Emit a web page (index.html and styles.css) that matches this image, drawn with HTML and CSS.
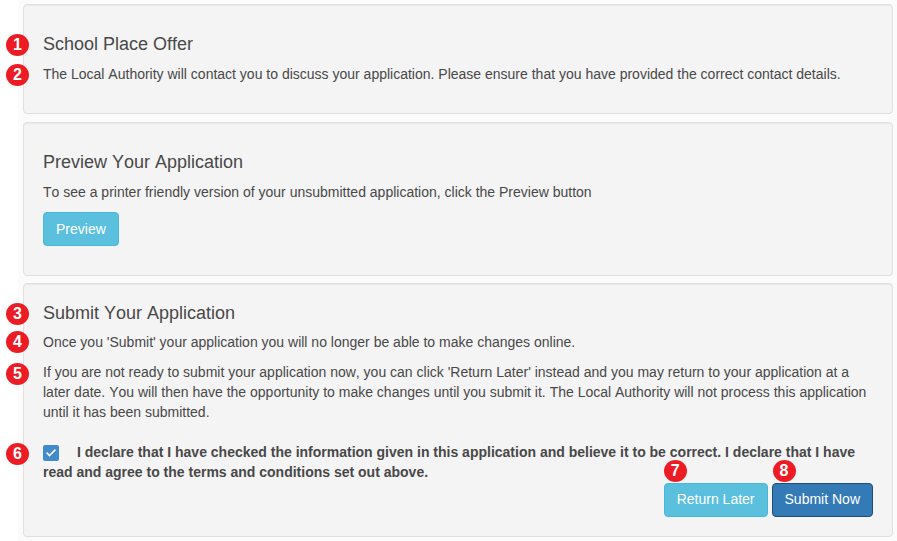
FILE: index.html
```
<!DOCTYPE html>
<html lang="en">

<head>
  <meta charset="UTF-8">
  <title>Submit Your Application</title>
  <link rel="stylesheet" href="styles.css">
</head>

<body>
  <main>
    <section class="well offer">
      <h4>School Place Offer<span class="step">1</span></h4>
      <p>The Local Authority will contact you to discuss your application. Please ensure that you have provided the correct contact details.<span class="step">2</span></p>
    </section>

    <section class="well preview">
      <h4>Preview Your Application</h4>
      <p>To see a printer friendly version of your unsubmitted application, click the Preview button</p>
      <button type="button" class="btn btn-info">Preview</button>
    </section>

    <section class="well submit">
      <h4>Submit Your Application<span class="step">3</span></h4>
      <p>Once you 'Submit' your application you will no longer be able to make changes online.<span class="step step-up">4</span></p>
      <p>If you are not ready to submit your application now, you can click 'Return Later' instead and you may return to your application at a later date. You will then have the opportunity to make changes until you submit it. The Local Authority will not process this application until it has been submitted.<span class="step step-down">5</span></p>
      <label for="declare">
        <input type="checkbox" id="declare" checked>
        <span class="check"><svg width="16" height="16" viewBox="0 0 16 16"><path d="M3.6 7.6 L6.5 10.5 L12.4 4.6" fill="none" stroke="#fff" stroke-width="1.6" /></svg></span>I declare that I have checked the information given in this application and believe it to be correct. I declare that I have read and agree to the terms and conditions set out above.<span class="step step-down">6</span>
      </label>
      <div class="actions">
        <button type="button" class="btn btn-info">Return Later<span class="step">7</span></button>
        <button type="button" class="btn btn-primary">Submit Now<span class="step">8</span></button>
      </div>
    </section>
  </main>
</body>

</html>
```

FILE: styles.css
```
* {
  box-sizing: border-box;
}

body {
  margin: 0;
  background-color: white;
  color: #484848;
  font-family: "Liberation Sans", Arial, sans-serif;
  font-size: 14px;
  font-kerning: none;
  line-height: 20px;
}

main {
  margin-left: 18px;
  padding: 4px 4px 4px 5px;
  background-color: #fbfbfb;
}

.well {
  padding: 19px;
  border: 1px solid #e0e0e0;
  border-radius: 4px;
  background-color: #f4f4f4;
  box-shadow: inset 0 1px 1px rgba(0, 0, 0, 0.05);
}

.offer {
  height: 110px;
  margin-bottom: 8px;
}

.preview {
  height: 154px;
  margin-bottom: 7px;
}

.submit {
  height: 254px;
}

h4 {
  position: relative;
  margin: 10px 0;
  font-size: 18px;
  font-weight: normal;
  line-height: 20px;
}

.submit h4 {
  margin: 0 0 9px;
}

p {
  position: relative;
  margin: 0 0 10px;
}

label {
  position: relative;
  display: block;
  margin: 20px 0 1px;
  font-weight: bold;
}

label input {
  position: absolute;
  opacity: 0;
}

.check {
  display: inline-block;
  width: 16px;
  height: 16px;
  margin-right: 18px;
  border-radius: 2px;
  background-color: #428bca;
  vertical-align: -4px;
}

.check svg {
  display: block;
}

.actions {
  display: flex;
  justify-content: flex-end;
  gap: 4px;
}

.btn {
  position: relative;
  height: 34px;
  padding: 6px 12px;
  border: 1px solid;
  border-radius: 4px;
  color: white;
  font: 14px/20px "Liberation Sans", Arial, sans-serif;
  font-kerning: none;
  cursor: pointer;
}

.actions .btn {
  padding-top: 5px;
  padding-bottom: 7px;
}

.btn-info {
  border-color: #46b8da;
  background-color: #5bc0de;
}

.btn-primary {
  border-color: #204d74;
  background-color: #337ab7;
}

/* Numbered markers */
.step {
  position: absolute;
  top: 0;
  left: -37px;
  width: 23px;
  height: 22px;
  border-radius: 50%;
  background-color: #ed1c24;
  color: white;
  font-size: 16px;
  font-weight: bold;
  line-height: 22px;
  text-align: center;
}

.step-up {
  top: -1px;
}

.step-down {
  top: 1px;
}

.btn .step {
  top: -24px;
  left: -1px;
}

.btn-primary .step {
  left: 0;
}
```
